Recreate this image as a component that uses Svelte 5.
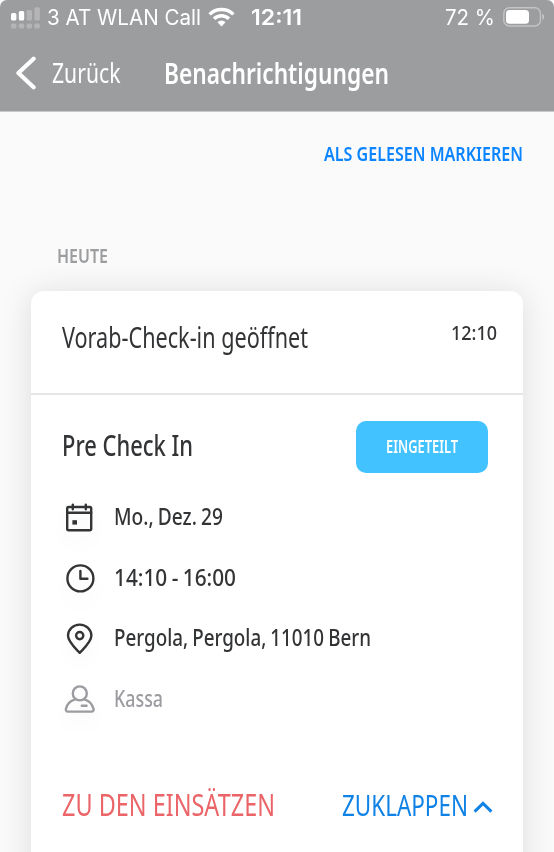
<script lang="ts">
  const details = [
    { icon: 'calendar', text: 'Mo., Dez. 29', width: 109 },
    { icon: 'clock', text: '14:10 - 16:00', width: 122 },
    { icon: 'pin', text: 'Pergola, Pergola, 11010 Bern', width: 257 },
    { icon: 'person', text: 'Kassa', width: 49, muted: true },
  ];

  let expanded = $state(true);

  // squeezes a label horizontally so that it takes up the given width
  function condense(node: HTMLElement, width: number) {
    const natural = node.getBoundingClientRect().width;
    node.style.transform = `scaleX(${width / natural})`;
    node.style.marginRight = `${width - natural}px`;
  }
</script>

<div class="screen">
  <header>
    <div class="status-bar">
      <svg class="signal" width="30" height="24" viewBox="0 0 30 24" fill="#fff">
        <rect x="0" y="8" width="5.4" height="7.6" rx="1.6" />
        <rect x="7.8" y="6" width="5.4" height="9.6" rx="1.6" />
        <g opacity="0.25">
          <rect x="15.6" y="5" width="5.4" height="10.6" rx="1.6" />
          <rect x="23.4" y="2.2" width="5.4" height="13.4" rx="1.6" />
          <rect x="0" y="18.6" width="5.4" height="5" rx="1.6" />
          <rect x="7.8" y="18.6" width="5.4" height="5" rx="1.6" />
          <rect x="15.6" y="18.6" width="5.4" height="5" rx="1.6" />
          <rect x="23.4" y="18.6" width="5.4" height="5" rx="1.6" />
        </g>
      </svg>
      <span class="carrier"><span class="fit" use:condense={154}>3 AT WLAN Call</span></span>
      <svg class="wifi" width="27" height="20" viewBox="0 0 27 20" fill="none" stroke="#fff" stroke-width="3.4">
        <path d="M1.6 7.4a17 17 0 0 1 23.8 0" />
        <path d="M6 11.8a10.7 10.7 0 0 1 15 0" />
        <path d="M13.5 19.4l-4-4.2a5.8 5.8 0 0 1 8 0z" fill="#fff" stroke="none" />
      </svg>
      <span class="clock"><span class="fit" use:condense={51}>12:11</span></span>
      <span class="battery-level"><span class="fit" use:condense={50}>72 %</span></span>
      <svg class="battery" width="42" height="20" viewBox="0 0 42 20" fill="none">
        <rect x="0.8" y="0.8" width="36.6" height="18.2" rx="5.6" stroke="#fff" stroke-opacity="0.4" stroke-width="1.4" />
        <rect x="3" y="3" width="23" height="13.8" rx="3.6" fill="#fff" />
        <path d="M39.3 6.8c2.4 1 2.4 5.2 0 6.2z" fill="#fff" fill-opacity="0.45" />
      </svg>
    </div>
    <div class="nav-bar">
      <button type="button" class="back">
        <svg width="20" height="34" viewBox="0 0 20 34" fill="none" stroke="#fff" stroke-width="4.2" stroke-linecap="round" stroke-linejoin="round">
          <path d="M17.6 2.8L2.4 17l15.2 14.2" />
        </svg>
        <span class="fit" use:condense={68.5}>Zurück</span>
      </button>
      <h1><span class="fit" use:condense={225}>Benachrichtigungen</span></h1>
    </div>
  </header>

  <main>
    <div class="toolbar">
      <button type="button" class="mark-read"><span class="fit" use:condense={199}>ALS GELESEN MARKIEREN</span></button>
    </div>

    <h2><span class="fit" use:condense={51}>HEUTE</span></h2>

    <article class="card">
      <div class="card-head">
        <h3><span class="fit" use:condense={246}>Vorab-Check-in geöffnet</span></h3>
        <time><span class="fit" use:condense={46}>12:10</span></time>
      </div>

      {#if expanded}
        <div class="card-body">
          <div class="job">
            <h4><span class="fit" use:condense={131}>Pre Check In</span></h4>
            <span class="badge"><span class="fit" use:condense={72}>EINGETEILT</span></span>
          </div>
          <ul>
            {#each details as item}
              <li class:muted={item.muted}>
                <svg width="32" height="32" viewBox="0 0 32 32" fill="none" stroke="currentColor" stroke-width="2.4" stroke-linecap="round" stroke-linejoin="round">
                  {#if item.icon === 'calendar'}
                    <rect x="4.2" y="6" width="24" height="23.2" rx="1.4" />
                    <path d="M4.2 11.8h24M9.8 3.6v4.6M22.8 3.6v4.6" />
                    <rect x="9.4" y="19.2" width="4.6" height="4.4" fill="currentColor" stroke="none" />
                  {:else if item.icon === 'clock'}
                    <circle cx="17.4" cy="16.4" r="13" />
                    <path d="M17.4 9v7.8h7" />
                  {:else if item.icon === 'pin'}
                    <path d="M16.7 30.8C11.9 25.8 5 20 5 13.6a11.7 11 0 0 1 23.4 0c0 6.4-6.9 12.2-11.7 17.2z" />
                    <circle cx="16.7" cy="13.6" r="3.6" />
                  {:else}
                    <circle cx="16.8" cy="10.4" r="7" />
                    <path d="M11.6 16.6C6.6 18.2 3.8 21.2 2.9 25.9c-.3 1.6.5 2.7 2 2.7h23.6c1.5 0 2.4-1.1 2-2.7-1.1-4.7-3.6-7.7-8.6-9.3M18.8 22.8h4.8" />
                  {/if}
                </svg>
                <span class="fit" use:condense={item.width}>{item.text}</span>
              </li>
            {/each}
          </ul>
        </div>
      {/if}

      <div class="actions">
        <button type="button" class="go"><span class="fit" use:condense={213}>ZU DEN EINSÄTZEN</span></button>
        <button type="button" class="toggle" onclick={() => (expanded = !expanded)}>
          <span class="fit" use:condense={126}>ZUKLAPPEN</span>
          <svg width="20" height="14" viewBox="0 0 20 14" fill="none" stroke="currentColor" stroke-width="3">
            <path d="M1.6 11.6L10 3.4l8.4 8.2" />
          </svg>
        </button>
      </div>
    </article>
  </main>
</div>

<style>
  :global(body) {
    margin: 0;
    background: #fafafa;
  }

  .screen {
    height: 852px;
    overflow: hidden;
    background: #fafafa;
    color: #333436;
    font-family: 'Noto Sans', 'Open Sans', sans-serif;
  }

  .fit {
    display: inline-block;
    white-space: nowrap;
    transform-origin: 0 50%;
  }

  button {
    display: flex;
    align-items: center;
    padding: 0;
    border: 0;
    background: none;
    color: inherit;
    font: inherit;
    cursor: pointer;
  }

  h1,
  h2,
  h3,
  h4,
  ul {
    margin: 0;
    padding: 0;
    font-weight: 400;
  }

  header {
    box-sizing: border-box;
    height: 112px;
    border-bottom: 1px solid #c9c9ca;
    border-radius: 7px 7px 0 0;
    background: #9c9d9f;
    color: #fff;
  }

  .status-bar {
    display: flex;
    align-items: center;
    height: 36px;
    padding: 0 9px 0 11px;
    font: 400 21px/36px Inter, sans-serif;
  }

  .signal {
    margin: -3px 6px 0 0;
  }

  .wifi {
    margin: -3px 16px 0 7px;
  }

  .clock {
    font-weight: 600;
  }

  .battery-level {
    margin-left: auto;
  }

  .battery {
    margin: -2px 0 0 8px;
  }

  .nav-bar {
    display: flex;
    align-items: center;
    height: 73px;
    padding-left: 16px;
    font-size: 28px;
  }

  .back {
    gap: 16px;
  }

  .back .fit,
  h1 .fit {
    margin-top: -2px;
  }

  h1 {
    margin-left: 43.5px;
    font-size: 28px;
    font-weight: 600;
  }

  .toolbar {
    display: flex;
    justify-content: flex-end;
    height: 82px;
    padding-right: 31px;
  }

  .mark-read {
    color: #0a84ff;
    font-size: 20.5px;
    font-weight: 600;
  }

  h2 {
    margin-top: 26px;
    padding-left: 57px;
    color: #9c9d9f;
    font-size: 20.5px;
    font-weight: 600;
    line-height: 71px;
  }

  .card {
    height: 620px;
    margin: 0 31px;
    border-radius: 13px;
    background: #fff;
    box-shadow: 0 2px 32px rgba(0, 0, 0, 0.12);
  }

  .card-head {
    display: flex;
    align-items: flex-start;
    justify-content: space-between;
    box-sizing: border-box;
    height: 104px;
    padding: 25px 26px 0 31px;
    border-bottom: 2px solid #e6e6e6;
  }

  h3 {
    font-size: 29px;
    line-height: 41px;
  }

  time {
    font-size: 20.5px;
    font-weight: 500;
    line-height: 33px;
  }

  .card-body {
    padding: 26px 35px 0 31px;
  }

  .job {
    display: flex;
    justify-content: space-between;
    height: 66px;
  }

  h4 {
    font-size: 28px;
    font-weight: 500;
    line-height: 49px;
  }

  .badge {
    width: 132px;
    height: 52px;
    border-radius: 10px;
    background: #42c2ff;
    color: #fff;
    font-size: 17.3px;
    font-weight: 600;
    line-height: 51px;
    text-align: center;
  }

  ul {
    list-style: none;
  }

  li {
    display: flex;
    align-items: center;
    gap: 19px;
    height: 60.6px;
    padding-left: 1px;
    font-size: 23px;
    font-weight: 500;
    word-spacing: -1px;
  }

  li svg {
    filter: drop-shadow(0 10px 8px rgba(0, 0, 0, 0.04));
  }

  li .fit {
    margin-top: -2px;
  }

  .muted {
    color: #9b9ca0;
  }

  .actions {
    display: flex;
    justify-content: space-between;
    height: 60px;
    margin-top: 45px;
    padding: 0 30px 0 31px;
  }

  .go {
    color: #eb6468;
    font-size: 30px;
  }

  .toggle {
    gap: 5px;
    color: #0f82e6;
    font-size: 29px;
  }

  .toggle svg {
    margin-top: 6px;
  }
</style>
